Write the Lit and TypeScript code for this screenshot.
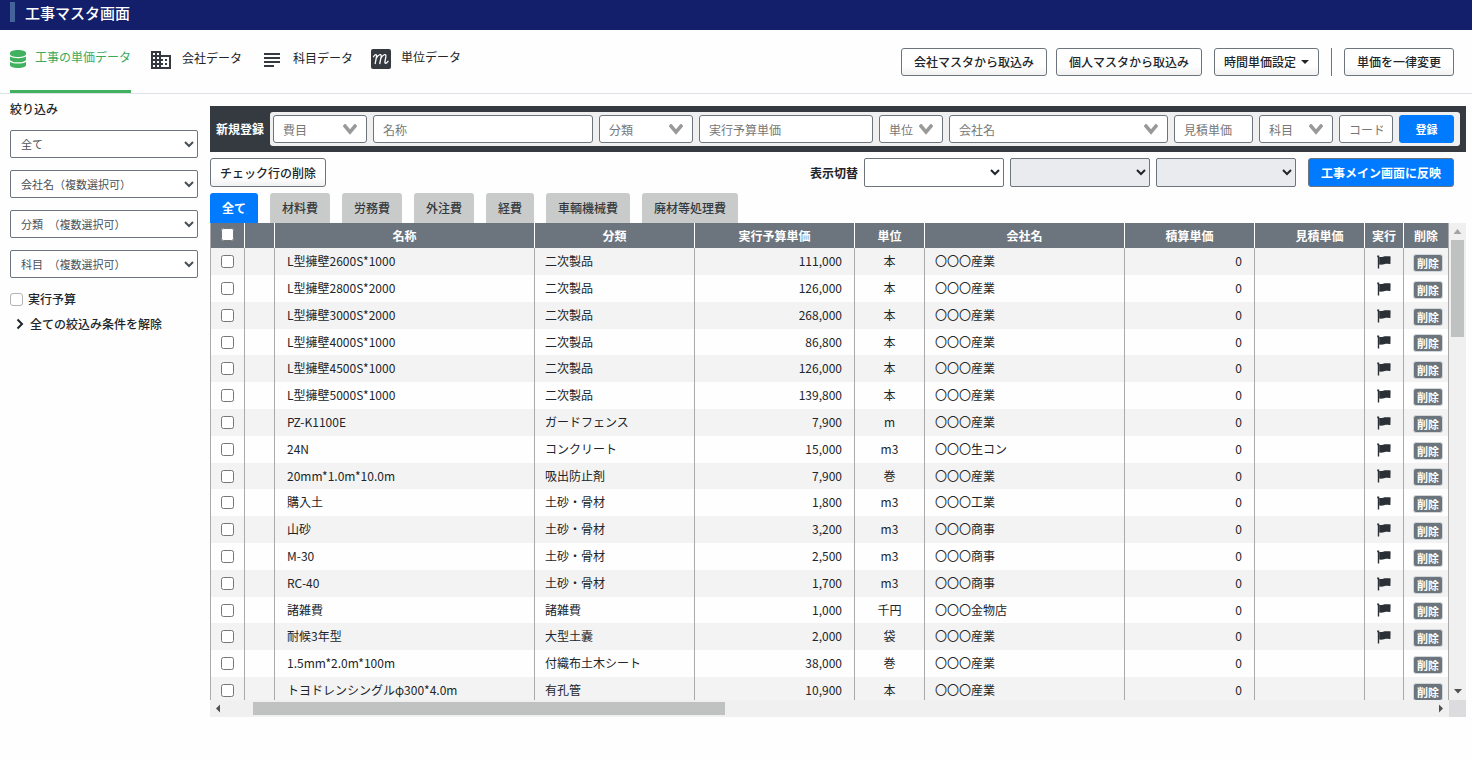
import { LitElement, html, css, svg, nothing } from "lit";
import { customElement, property, state } from "lit/decorators.js";
import { classMap } from "lit/directives/class-map.js";

interface Row {
  name: string;
  kind: string;
  budget: string;
  unit: string;
  company: string;
  flag: boolean;
}

const row = (name: string, kind: string, budget: string, unit: string, company: string, flag = true): Row => ({
  name, kind, budget, unit, company: "〇〇〇" + company, flag,
});

const ROWS: Row[] = [
  row("L型擁壁2600S*1000", "二次製品", "111,000", "本", "産業"),
  row("L型擁壁2800S*2000", "二次製品", "126,000", "本", "産業"),
  row("L型擁壁3000S*2000", "二次製品", "268,000", "本", "産業"),
  row("L型擁壁4000S*1000", "二次製品", "86,800", "本", "産業"),
  row("L型擁壁4500S*1000", "二次製品", "126,000", "本", "産業"),
  row("L型擁壁5000S*1000", "二次製品", "139,800", "本", "産業"),
  row("PZ-K1100E", "ガードフェンス", "7,900", "m", "産業"),
  row("24N", "コンクリート", "15,000", "m3", "生コン"),
  row("20mm*1.0m*10.0m", "吸出防止剤", "7,900", "巻", "産業"),
  row("購入土", "土砂・骨材", "1,800", "m3", "工業"),
  row("山砂", "土砂・骨材", "3,200", "m3", "商事"),
  row("M-30", "土砂・骨材", "2,500", "m3", "商事"),
  row("RC-40", "土砂・骨材", "1,700", "m3", "商事"),
  row("諸雑費", "諸雑費", "1,000", "千円", "金物店"),
  row("耐候3年型", "大型土嚢", "2,000", "袋", "産業"),
  row("1.5mm*2.0m*100m", "付織布土木シート", "38,000", "巻", "産業", false),
  row("トヨドレンシングルφ300*4.0m", "有孔管", "10,900", "本", "産業", false),
];

const TABS = ["全て", "材料費", "労務費", "外注費", "経費", "車輌機械費", "廃材等処理費"];

const base = css`
  * { box-sizing: border-box; }
  :host {
    font-family: "Noto Sans CJK JP", "Noto Sans", sans-serif;
    font-size: 12px;
    line-height: 18px;
    color: #212529;
  }
  button, input, select { font: inherit; color: inherit; margin: 0; }
  .btn {
    height: 28px;
    padding: 0 12px;
    border: 1px solid #6c757d;
    border-radius: 3px;
    background: linear-gradient(#fff 65%, #f1f1f1);
    font-weight: 500;
    color: #212529;
    white-space: nowrap;
  }
  .btn-primary { background: #007bff; color: #fff; font-weight: 700; }
  input[type="checkbox"] { display: block; width: 13px; height: 13px; }
`;

@customElement("top-nav")
class TopNav extends LitElement {
  static styles = [base, css`
    :host { display: block; }
    .title {
      display: flex; align-items: flex-start; gap: 10px;
      height: 30px; padding: 2px 10px; background: #131f6b;
    }
    .mark { width: 5px; height: 20px; background: #45629a; }
    h1 { margin: 0; font-size: 15px; line-height: 22px; font-weight: 500; color: #fff; }
    .bar {
      display: flex; justify-content: space-between; align-items: flex-start;
      height: 64px; border-bottom: 1px solid #dee2e6; padding: 0 18px 0 10px;
    }
    nav { display: flex; gap: 18px; height: 63px; }
    a {
      display: flex; align-items: flex-start; gap: 10px;
      padding-top: 18px; color: #212529; text-decoration: none; white-space: nowrap;
    }
    a.on { color: #3aaa5a; border-bottom: 3px solid #3fb15f; gap: 9px; }
    a.low { padding-top: 19px; }
    svg { display: block; }
    .actions { display: flex; align-items: center; gap: 12px; padding-top: 18px; }
    .pair { display: flex; gap: 9px; }
    .split { width: 1px; height: 28px; background: #6c757d; }
    .caret {
      display: inline-block; margin-left: 5px; vertical-align: 3px;
      border: 4px solid transparent; border-top-color: #212529; border-bottom: 0;
    }
    .menu { padding: 0 9px; }
  `];

  render() {
    return html`
      <header class="title"><span class="mark"></span><h1>工事マスタ画面</h1></header>
      <div class="bar">
        <nav>
          <a class="on" href="#cost">
            <svg width="16" height="22" viewBox="0 0 16 22" fill="#3fb15f">
              <path d="M0 5C0 3.200 3.600 2 8 2s8 1.200 8 3v1.200c0 1.600-3.600 2.800-8 2.800S0 7.800 0 6.200z"/>
              <path d="M0 8.600C2 9.800 5 10.300 8 10.300s6-.5 8-1.700v2.800c0 1.600-3.600 2.900-8 2.900s-8-1.300-8-2.900z"/>
              <path d="M0 13.900c2 1.200 5 1.700 8 1.700s6-.5 8-1.700v3c0 1.800-3.600 3.100-8 3.100s-8-1.300-8-3.100z"/>
            </svg>
            <span>工事の単価データ</span>
          </a>
          <a class="low" href="#company">
            <svg width="23" height="24" viewBox="-2 1 23 24" fill="#343a40">
              <path fill-rule="evenodd" d="M0 3h10v4h10v14H0zM2 5v2h2V5zm4 0v2h2V5zM2 9v2h2V9zm4 0v2h2V9zm-4 4v2h2v-2zm4 0v2h2v-2zm-4 4v2h2v-2zm4 0v2h2v-2zm4-8v2h2v2h-2v2h2v2h-2v2h8V9zm4 2h2v2h-2zm0 4h2v2h-2z"/>
            </svg>
            <span>会社データ</span>
          </a>
          <a class="low" href="#subject">
            <svg width="23" height="24" viewBox="-2 1 23 24" fill="#343a40">
              <path d="M2 5h16v2H2zM2 9h16v2H2zM2 13h16v2H2zM2 17h10v2H2z"/>
            </svg>
            <span>科目データ</span>
          </a>
          <a href="#unit">
            <svg width="20" height="22" viewBox="0 0 20 22">
              <rect y="1" width="20" height="20" rx="2" fill="#343a40"/>
              <path d="M2.500 8.800C4 6.200 5.800 6 5.600 8.200L4.200 15.500M5.300 10.200C7 6.800 10.400 5 10.200 8.400L8.800 15.500M9.900 10.200C11.600 6.800 15.300 5 14.900 8.400L13.900 13.800c-.3 2.200 1.600 1.800 3.100-.5" fill="none" stroke="#fff" stroke-width="1.300" stroke-linecap="round"/>
            </svg>
            <span>単位データ</span>
          </a>
        </nav>
        <div class="actions">
          <div class="pair">
            <button class="btn">会社マスタから取込み</button>
            <button class="btn">個人マスタから取込み</button>
          </div>
          <button class="btn menu">時間単価設定<span class="caret"></span></button>
          <span class="split"></span>
          <button class="btn">単価を一律変更</button>
        </div>
      </div>`;
  }
}

@customElement("filter-side")
class FilterSide extends LitElement {
  static styles = [base, css`
    :host { display: block; }
    h2 { margin: 0 0 12px; font-size: 12px; line-height: 18px; font-weight: 500; }
    .list { display: flex; flex-direction: column; gap: 12px; }
    select {
      display: block; width: 100%; height: 28px; padding: 0 0 0 6px;
      border: 1px solid #6c757d; border-radius: 2px; background: #fff;
      font-size: 11px; color: #495057;
    }
    .check { display: flex; align-items: center; gap: 5px; margin-top: 12px; font-weight: 500; }
    .check input {
      appearance: none; border: 1px solid #b3b3b3; border-radius: 3px; background: #fff;
    }
    .check input:checked { background: #007bff; }
    .clear {
      display: flex; align-items: center; gap: 6px; margin-top: 7px; padding: 0 0 0 6px;
      border: 0; background: none; font-weight: 500;
    }
  `];

  render() {
    return html`
      <h2>絞り込み</h2>
      <div class="list">
        ${["全て", "会社名（複数選択可）", "分類　（複数選択可）", "科目　（複数選択可）"].map(
          (t) => html`<select aria-label=${t}><option>${t}</option></select>`)}
      </div>
      <label class="check"><input type="checkbox">実行予算</label>
      <button class="clear">
        <svg width="8" height="12" viewBox="0 0 8 12"><path d="M1.500 1.500 6 6l-4.500 4.500" fill="none" stroke="#212529" stroke-width="2"/></svg>
        全ての絞込み条件を解除
      </button>`;
  }
}

@customElement("entry-bar")
class EntryBar extends LitElement {
  static styles = [base, css`
    :host { display: block; }
    form { display: flex; align-items: center; gap: 6px; padding: 6px; background: #343a40; }
    .cap { color: #fff; font-weight: 700; white-space: nowrap; }
    .fields {
      flex: 1; min-width: 0; display: grid; gap: 6px; padding: 3px 6px 3px 3px;
      grid-template-columns: 94px 220px 94px 174px 64px minmax(120px, 1fr) 79px 74px 54px 55px;
      background: #f0f0f0; border-radius: 3px;
    }
    input, select {
      width: 100%; min-width: 0; height: 28px; padding: 1px 9px 0;
      border: 1px solid #6c757d; border-radius: 3px; background: #fff; color: #777;
    }
    input::placeholder { color: #777; opacity: 1; }
    select {
      padding-top: 2px;
      appearance: none;
      background: #fff url("data:image/svg+xml,%3Csvg xmlns='http://www.w3.org/2000/svg' width='14' height='11' viewBox='0 0 14 11'%3E%3Cpath d='M0 2.600 0 1.800 1.600 0h1L7 5.200 11.400 0h1L14 1.800v.8L7 10.800z' fill='%23999'/%3E%3C/svg%3E") no-repeat right 9px center;
    }
    .send { padding: 0; border-color: #007bff; font-size: 11px; }
  `];

  private pick(t: string) {
    return html`<select aria-label=${t}><option>${t}</option></select>`;
  }
  private text(t: string) {
    return html`<input type="text" aria-label=${t} placeholder=${t}>`;
  }

  render() {
    return html`
      <form @submit=${(e: Event) => e.preventDefault()}>
        <span class="cap">新規登録</span>
        <div class="fields">
          ${this.pick("費目")}${this.text("名称")}${this.pick("分類")}${this.text("実行予算単価")}
          ${this.pick("単位")}${this.pick("会社名")}${this.text("見積単価")}${this.pick("科目")}
          ${this.text("コード")}
          <button class="btn btn-primary send">登録</button>
        </div>
      </form>`;
  }
}

const arrow = (d: string, off = false) =>
  html`<svg width="17" height="17" viewBox="0 0 17 17">${svg`<path d=${d} fill=${off ? "#a3a3a3" : "#505050"}/>`}</svg>`;

@customElement("price-table")
class PriceTable extends LitElement {
  @property({ attribute: false }) rows: Row[] = [];

  static styles = [base, css`
    :host {
      display: grid; min-height: 0;
      grid-template: minmax(0, 1fr) 17px / minmax(0, 1fr) 17px;
    }
    .view { overflow: hidden; }
    table { width: 100%; table-layout: fixed; border-collapse: separate; border-spacing: 0; border-left: 1px solid #aaa; }
    th, td { padding: 0; border-right: 1px solid #aaa; white-space: nowrap; overflow: hidden; }
    th { height: 25px; background: #6c757d; color: #fff; font-weight: 700; border-right-color: #fff; }
    th:last-child { border-right-color: #aaa; }
    td { height: 27px; padding-bottom: 1px; }
    tbody tr:nth-child(5n + 4) td { height: 26px; }
    tbody tr:nth-child(odd) { background: #f3f3f3; }
    tbody tr:nth-child(even) { background: #fefefe; }
    .tick { width: 34px; }
    .gap { width: 30px; }
    .kind, .budget { width: 160px; }
    .unit { width: 70px; }
    .company { width: 200px; }
    .calc { width: 130px; }
    .quote { width: 110px; }
    th.quote { padding-left: 20px; }
    .run { width: 39px; }
    .del { width: 45px; }
    input { margin: 0 auto; }
    th.tick { vertical-align: top; padding-top: 5px; }
    td.tick { padding-top: 1px; }
    td.name { padding-left: 12px; }
    td.kind, td.company { padding-left: 10px; }
    td.budget, td.calc { padding-right: 12px; text-align: right; }
    td.unit { text-align: center; }
    .run svg { display: block; margin: 0 auto; }
    td.run { padding-top: 1px; }
    td.del { padding: 2px 0 0 9px; }
    .del button {
      display: block; width: 30px; height: 18px; padding: 0;
      border: 1px solid #d3d7da; border-radius: 3px; background: #6c757d;
      color: #fff; font-size: 11px; line-height: 16px; font-weight: 700;
    }
    .bar { display: flex; background: #f0f0f0; }
    .bar svg { display: block; flex: none; }
    .track { flex: 1; display: flex; }
    .vert, .vert .track { flex-direction: column; }
    .thumb { background: #c0c2c1; }
    .vert .thumb { margin: 0 2px; height: 22%; }
    .horz .track { padding-left: 26px; }
    .horz .thumb { margin: 2px 0; width: 40%; }
    .corner { background: #dcdcde; }
  `];

  render() {
    return html`
      <div class="view">
        <table>
          <thead>
            <tr>
              <th class="tick"><input type="checkbox" aria-label="全選択"></th>
              <th class="gap"></th>
              <th>名称</th>
              <th class="kind">分類</th>
              <th class="budget">実行予算単価</th>
              <th class="unit">単位</th>
              <th class="company">会社名</th>
              <th class="calc">積算単価</th>
              <th class="quote">見積単価</th>
              <th class="run">実行</th>
              <th class="del">削除</th>
            </tr>
          </thead>
          <tbody>
            ${this.rows.map((r) => html`
              <tr>
                <td class="tick"><input type="checkbox" aria-label=${r.name}></td>
                <td></td>
                <td class="name">${r.name}</td>
                <td class="kind">${r.kind}</td>
                <td class="budget">${r.budget}</td>
                <td class="unit">${r.unit}</td>
                <td class="company">${r.company}</td>
                <td class="calc">0</td>
                <td></td>
                <td class="run">${r.flag ? html`
                  <svg width="14" height="14" viewBox="0 0 14 14" fill="#2b3036">
                    <path d="M.2.600h2v13h-1.400V2.200H.2z"/>
                    <path d="M2.200 1.800C4.500 2.400 6.500 1.200 9 1.200c1.700 0 3-.2 4.600.2l-.2 7.600c-1.800.3-3.400-.4-5.400 0-2 .5-3.800 1-5.800.6z"/>
                  </svg>` : nothing}</td>
                <td class="del"><button>削除</button></td>
              </tr>`)}
          </tbody>
        </table>
      </div>
      <div class="bar vert" aria-hidden="true">
        ${arrow("M8.500 6 12.500 11h-8z", true)}
        <div class="track"><div class="thumb"></div></div>
        ${arrow("M5 6h8L9 10.500z")}
      </div>
      <div class="bar horz" aria-hidden="true">
        ${arrow("M10 4.500v8L6 8.500z")}
        <div class="track"><div class="thumb"></div></div>
        ${arrow("M7 4.500v8l4-4z")}
      </div>
      <div class="corner"></div>`;
  }
}

@customElement("app-root")
class AppRoot extends LitElement {
  @state() private tab = 0;

  static styles = [base, css`
    :host { display: flex; flex-direction: column; height: 100vh; background: #fefefe; }
    .body {
      flex: 1; min-height: 0; display: grid; gap: 12px;
      grid-template-columns: 188px minmax(0, 1fr); padding: 0 6px 43px 10px;
    }
    filter-side { padding-top: 6px; }
    main { display: flex; flex-direction: column; min-height: 0; padding-top: 12px; }
    price-table { flex: 1; }
    .tools { display: flex; align-items: center; gap: 6px; padding: 6px 12px 6px 0; }
    .tools .btn { height: 29px; }
    .tools .remove { margin-right: auto; padding: 0 9px; }
    .tools .apply { margin-left: 6px; }
    label { font-weight: 700; }
    select { width: 140px; height: 29px; border: 1px solid #6c757d; border-radius: 2px; background: #fff; }
    select:disabled { background: #e9ebef; opacity: 1; color: #212529; }
    .tabs { display: flex; gap: 12px; }
    .tab {
      height: 30px; padding: 0 12px; border: 0; border-radius: 3px 3px 0 0;
      background: #c9cbca; color: #343a40; font-weight: 500;
    }
    .tab.on { background: #007bff; color: #fff; font-weight: 700; }
  `];

  render() {
    return html`
      <top-nav></top-nav>
      <div class="body">
        <filter-side></filter-side>
        <main>
          <entry-bar></entry-bar>
          <div class="tools">
            <button class="btn remove">チェック行の削除</button>
            <label for="view">表示切替</label>
            <select id="view"></select>
            <select disabled aria-label="表示切替2"></select>
            <select disabled aria-label="表示切替3"></select>
            <button class="btn btn-primary apply">工事メイン画面に反映</button>
          </div>
          <div class="tabs">
            ${TABS.map((t, i) => html`
              <button class=${classMap({ tab: true, on: i === this.tab })} @click=${() => (this.tab = i)}>${t}</button>`)}
          </div>
          <price-table .rows=${ROWS}></price-table>
        </main>
      </div>`;
  }
}
